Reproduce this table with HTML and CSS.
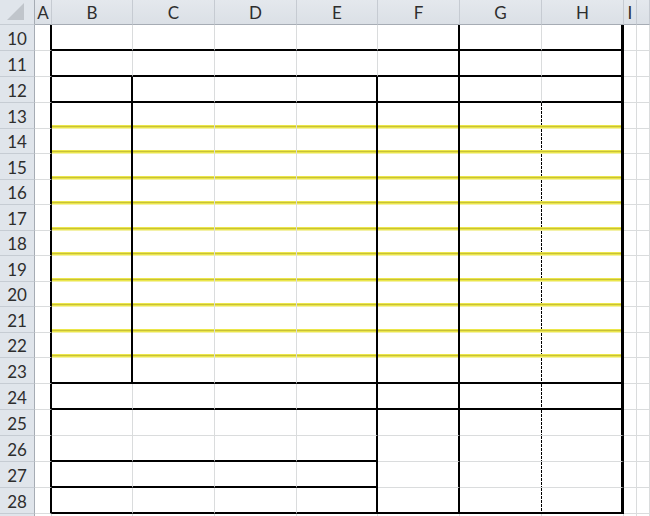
FILE: index.html
```html
<!DOCTYPE html>
<html>
<head>
<meta charset="utf-8">
<link rel="stylesheet" href="styles.css">
</head>
<body>
<div class="sheet">
  <div class="row hdr">
    <div class="cell rh corner"><span class="tri"></span></div>
    <div class="cell a">A</div>
    <div class="cell b">B</div>
    <div class="cell c">C</div>
    <div class="cell d">D</div>
    <div class="cell e">E</div>
    <div class="cell f">F</div>
    <div class="cell g">G</div>
    <div class="cell h">H</div>
    <div class="cell i">I</div>
    <div class="cell j"></div>
  </div>

  <div class="row r26">
    <div class="cell rh">10</div>
    <div class="cell a kr"></div>
    <div class="cell b kb"></div><div class="cell c kb"></div><div class="cell d kb"></div><div class="cell e kb"></div>
    <div class="cell f kb kr"></div><div class="cell g kb"></div><div class="cell h kb kr3"></div>
    <div class="cell i"></div><div class="cell j"></div>
  </div>
  <div class="row r26">
    <div class="cell rh">11</div>
    <div class="cell a kr"></div>
    <div class="cell b kb"></div><div class="cell c kb"></div><div class="cell d kb"></div><div class="cell e kb"></div>
    <div class="cell f kb kr"></div><div class="cell g kb"></div><div class="cell h kb kr3"></div>
    <div class="cell i"></div><div class="cell j"></div>
  </div>
  <div class="row r26">
    <div class="cell rh">12</div>
    <div class="cell a kr"></div>
    <div class="cell b kb kr"></div><div class="cell c kb"></div><div class="cell d kb"></div><div class="cell e kb kr"></div>
    <div class="cell f kb kr"></div><div class="cell g kb"></div><div class="cell h kb kr3"></div>
    <div class="cell i"></div><div class="cell j"></div>
  </div>
  <div class="row r26">
    <div class="cell rh">13</div>
    <div class="cell a kr"></div>
    <div class="cell b yb kr"></div><div class="cell c yb"></div><div class="cell d yb"></div><div class="cell e yb kr"></div>
    <div class="cell f yb kr"></div><div class="cell g yb dr"></div><div class="cell h yb kr3"></div>
    <div class="cell i"></div><div class="cell j"></div>
  </div>
  <div class="row r25">
    <div class="cell rh">14</div>
    <div class="cell a kr"></div>
    <div class="cell b yb kr"></div><div class="cell c yb"></div><div class="cell d yb"></div><div class="cell e yb kr"></div>
    <div class="cell f yb kr"></div><div class="cell g yb dr"></div><div class="cell h yb kr3"></div>
    <div class="cell i"></div><div class="cell j"></div>
  </div>
  <div class="row r26">
    <div class="cell rh">15</div>
    <div class="cell a kr"></div>
    <div class="cell b yb kr"></div><div class="cell c yb"></div><div class="cell d yb"></div><div class="cell e yb kr"></div>
    <div class="cell f yb kr"></div><div class="cell g yb dr"></div><div class="cell h yb kr3"></div>
    <div class="cell i"></div><div class="cell j"></div>
  </div>
  <div class="row r25">
    <div class="cell rh">16</div>
    <div class="cell a kr"></div>
    <div class="cell b yb kr"></div><div class="cell c yb"></div><div class="cell d yb"></div><div class="cell e yb kr"></div>
    <div class="cell f yb kr"></div><div class="cell g yb dr"></div><div class="cell h yb kr3"></div>
    <div class="cell i"></div><div class="cell j"></div>
  </div>
  <div class="row r26">
    <div class="cell rh">17</div>
    <div class="cell a kr"></div>
    <div class="cell b yb kr"></div><div class="cell c yb"></div><div class="cell d yb"></div><div class="cell e yb kr"></div>
    <div class="cell f yb kr"></div><div class="cell g yb dr"></div><div class="cell h yb kr3"></div>
    <div class="cell i"></div><div class="cell j"></div>
  </div>
  <div class="row r25">
    <div class="cell rh">18</div>
    <div class="cell a kr"></div>
    <div class="cell b yb kr"></div><div class="cell c yb"></div><div class="cell d yb"></div><div class="cell e yb kr"></div>
    <div class="cell f yb kr"></div><div class="cell g yb dr"></div><div class="cell h yb kr3"></div>
    <div class="cell i"></div><div class="cell j"></div>
  </div>
  <div class="row r26">
    <div class="cell rh">19</div>
    <div class="cell a kr"></div>
    <div class="cell b yb kr"></div><div class="cell c yb"></div><div class="cell d yb"></div><div class="cell e yb kr"></div>
    <div class="cell f yb kr"></div><div class="cell g yb dr"></div><div class="cell h yb kr3"></div>
    <div class="cell i"></div><div class="cell j"></div>
  </div>
  <div class="row r25">
    <div class="cell rh">20</div>
    <div class="cell a kr"></div>
    <div class="cell b yb kr"></div><div class="cell c yb"></div><div class="cell d yb"></div><div class="cell e yb kr"></div>
    <div class="cell f yb kr"></div><div class="cell g yb dr"></div><div class="cell h yb kr3"></div>
    <div class="cell i"></div><div class="cell j"></div>
  </div>
  <div class="row r26">
    <div class="cell rh">21</div>
    <div class="cell a kr"></div>
    <div class="cell b yb kr"></div><div class="cell c yb"></div><div class="cell d yb"></div><div class="cell e yb kr"></div>
    <div class="cell f yb kr"></div><div class="cell g yb dr"></div><div class="cell h yb kr3"></div>
    <div class="cell i"></div><div class="cell j"></div>
  </div>
  <div class="row r25">
    <div class="cell rh">22</div>
    <div class="cell a kr"></div>
    <div class="cell b yb kr"></div><div class="cell c yb"></div><div class="cell d yb"></div><div class="cell e yb kr"></div>
    <div class="cell f yb kr"></div><div class="cell g yb dr"></div><div class="cell h yb kr3"></div>
    <div class="cell i"></div><div class="cell j"></div>
  </div>
  <div class="row r26">
    <div class="cell rh">23</div>
    <div class="cell a kr"></div>
    <div class="cell b kb kr"></div><div class="cell c kb"></div><div class="cell d kb"></div><div class="cell e kb kr"></div>
    <div class="cell f kb kr"></div><div class="cell g kb dr"></div><div class="cell h kb kr3"></div>
    <div class="cell i"></div><div class="cell j"></div>
  </div>
  <div class="row r26">
    <div class="cell rh">24</div>
    <div class="cell a kr"></div>
    <div class="cell b kb"></div><div class="cell c kb"></div><div class="cell d kb"></div><div class="cell e kb kr"></div>
    <div class="cell f kb kr"></div><div class="cell g kb dr"></div><div class="cell h kb kr3"></div>
    <div class="cell i"></div><div class="cell j"></div>
  </div>
  <div class="row r26">
    <div class="cell rh">25</div>
    <div class="cell a kr"></div>
    <div class="cell b"></div><div class="cell c"></div><div class="cell d"></div><div class="cell e kr"></div>
    <div class="cell f kr"></div><div class="cell g dr"></div><div class="cell h kr3"></div>
    <div class="cell i"></div><div class="cell j"></div>
  </div>
  <div class="row r26">
    <div class="cell rh">26</div>
    <div class="cell a kr"></div>
    <div class="cell b kb"></div><div class="cell c kb"></div><div class="cell d kb"></div><div class="cell e kb kr"></div>
    <div class="cell f kr"></div><div class="cell g dr"></div><div class="cell h kr3"></div>
    <div class="cell i"></div><div class="cell j"></div>
  </div>
  <div class="row r26">
    <div class="cell rh">27</div>
    <div class="cell a kr"></div>
    <div class="cell b kb"></div><div class="cell c kb"></div><div class="cell d kb"></div><div class="cell e kb kr"></div>
    <div class="cell f kr"></div><div class="cell g dr"></div><div class="cell h kr3"></div>
    <div class="cell i"></div><div class="cell j"></div>
  </div>
  <div class="row r26">
    <div class="cell rh">28</div>
    <div class="cell a kr"></div>
    <div class="cell b kb"></div><div class="cell c kb"></div><div class="cell d kb"></div><div class="cell e kb kr"></div>
    <div class="cell f kb kr"></div><div class="cell g kb dr"></div><div class="cell h kb kr3"></div>
    <div class="cell i"></div><div class="cell j"></div>
  </div>
  <div class="row r26">
    <div class="cell rh"></div>
    <div class="cell a"></div>
    <div class="cell b"></div><div class="cell c"></div><div class="cell d"></div><div class="cell e"></div>
    <div class="cell f"></div><div class="cell g"></div><div class="cell h"></div>
    <div class="cell i"></div><div class="cell j"></div>
  </div>
</div>
</body>
</html>
```

FILE: styles.css
```css
html, body {
  margin: 0;
  padding: 0;
  background: #ffffff;
  overflow: hidden;
}

.sheet {
  width: 650px;
  height: 516px;
  overflow: hidden;
  display: flex;
  flex-direction: column;
  font-family: Lato, "Open Sans", "Liberation Sans", sans-serif;
  color: #2e2e2e;
}

.row {
  display: flex;
  flex: none;
}

.hdr { height: 25px; }
.r26 { height: 26px; }
.r25 { height: 25px; }

.cell {
  box-sizing: border-box;
  flex: none;
  border-right: 1px solid #dadcdd;
  border-bottom: 1px solid #dadcdd;
}

.rh { width: 35px; }
.a { width: 17px; }
.b { width: 81px; }
.c { width: 82px; }
.d { width: 82px; }
.e { width: 81px; }
.f { width: 82px; }
.g { width: 82px; }
.h { width: 82px; }
.i { width: 13px; }
.j { flex: 1 0 auto; }

/* column header */
.hdr .cell {
  background: linear-gradient(#e4e8ed, #dbe0e6);
  border-right: 1px solid #c6cbd2;
  border-bottom: 1px solid #a6acb4;
  display: flex;
  align-items: center;
  justify-content: center;
  font-size: 17px;
  padding-top: 1px;
}

.hdr .corner {
  background: #dde2e7;
  border-right: 1px solid #a6acb4;
  display: flex;
  align-items: flex-end;
  justify-content: flex-end;
  padding: 0 3px 2px 0;
}

.tri {
  display: block;
  width: 17px;
  height: 17px;
  background: #c0c5cb;
  clip-path: polygon(100% 0, 100% 100%, 0 100%);
}

/* row header */
.row .rh {
  background: #e0e5eb;
  border-right: 1px solid #a6acb4;
  border-bottom: 1px solid #c6ccd3;
  display: flex;
  align-items: center;
  justify-content: center;
  font-size: 17px;
  padding-top: 1px;
}

/* borders */
.kb { border-bottom: 2px solid #000000; }
.kr { border-right: 2px solid #000000; }
.kr3 { border-right: 3px solid #000000; }

.dr {
  border-right: 0;
  background: repeating-linear-gradient(to bottom, #000000 0, #000000 3px, transparent 3px, transparent 4px) right top / 1px 100% no-repeat;
}

.yb {
  border-bottom: 0;
  background: linear-gradient(to top,
    #f3f1a8 0, #f3f1a8 1px,
    #ebe64a 1px, #ebe64a 2px,
    #c8c136 2px, #c8c136 3px,
    #ebe64a 3px, #ebe64a 4px,
    transparent 4px);
}

.yb.dr {
  background:
    repeating-linear-gradient(to bottom, #000000 0, #000000 3px, transparent 3px, transparent 4px) right top / 1px calc(100% - 4px) no-repeat,
    linear-gradient(to top,
      #f3f1a8 0, #f3f1a8 1px,
      #ebe64a 1px, #ebe64a 2px,
      #c8c136 2px, #c8c136 3px,
      #ebe64a 3px, #ebe64a 4px,
      transparent 4px);
}
```
